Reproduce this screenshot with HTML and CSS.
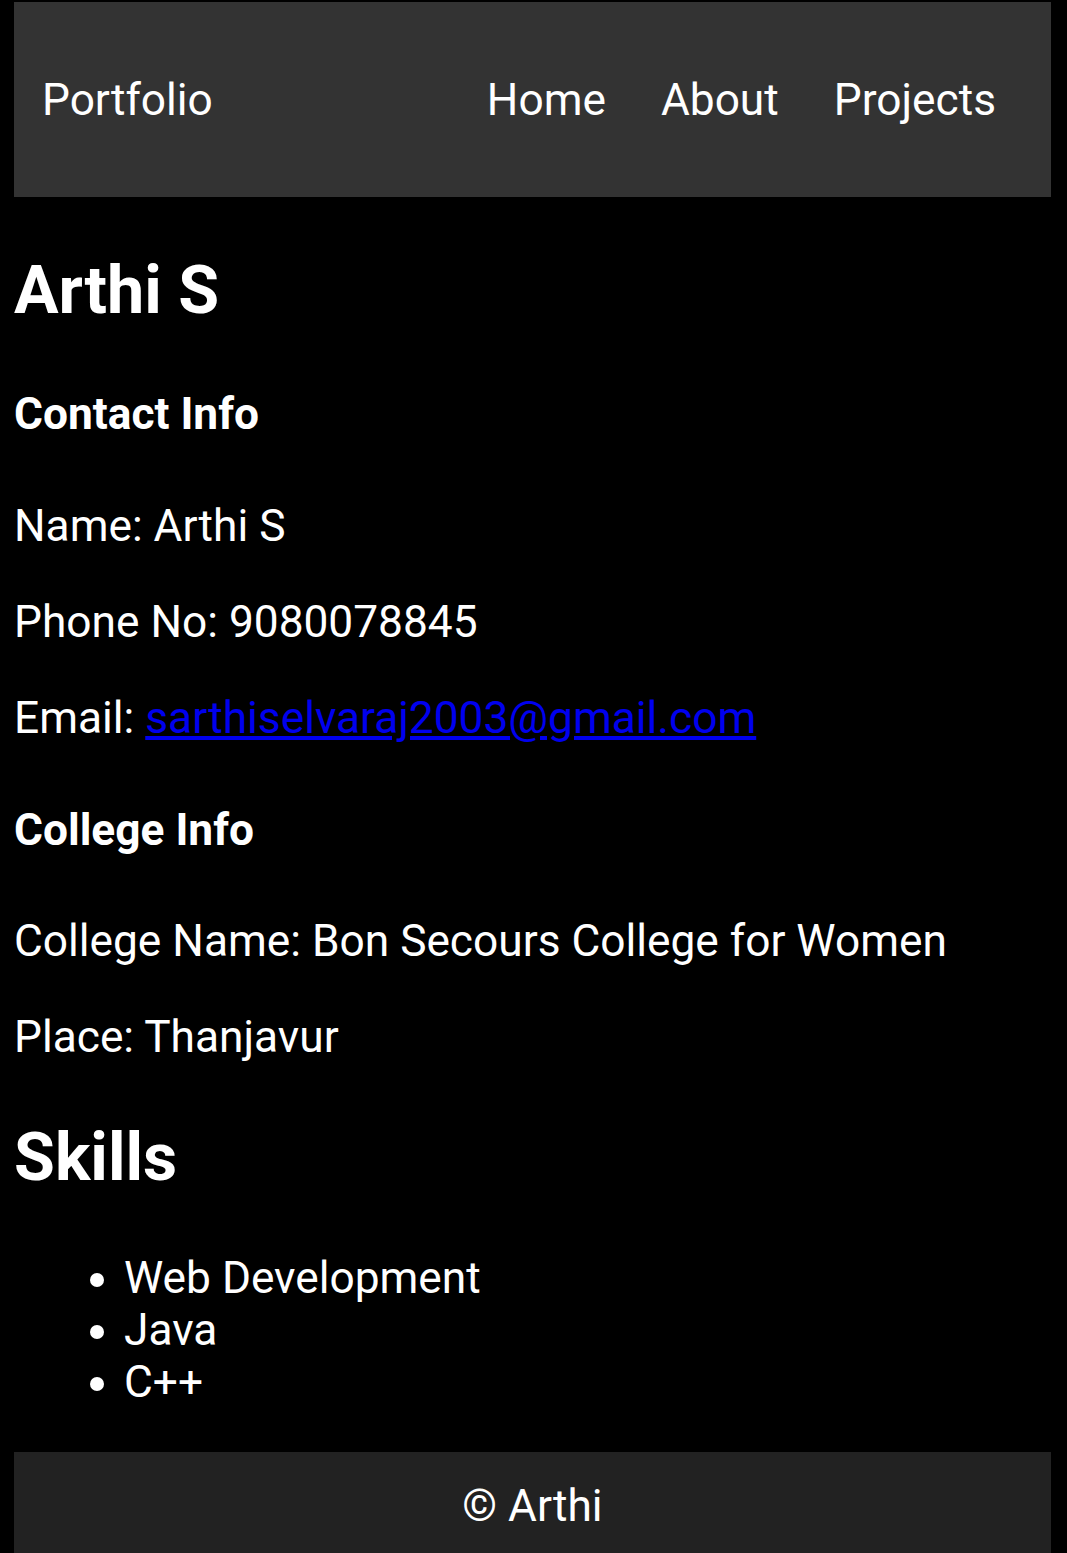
FILE: index.html
```html
<!DOCTYPE html>
<html lang="en">
<head>
<meta charset="utf-8">
<title>Portfolio</title>
<link rel="stylesheet" href="styles.css">
</head>
<body>
<header class="site-header">
  <div class="brand">Portfolio</div>
  <nav class="nav">
    <a href="#home">Home</a>
    <a href="#about">About</a>
    <a href="#projects">Projects</a>
  </nav>
</header>
<main class="content">
  <h1 class="title">Arthi S</h1>
  <h3 class="section section-first">Contact Info</h3>
  <p class="line">Name: Arthi S</p>
  <p class="line">Phone No: 9080078845</p>
  <p class="line">Email: <a class="mail" href="mailto:sarthiselvaraj2003@gmail.com">sarthiselvaraj2003@gmail.com</a></p>
  <h3 class="section section-second">College Info</h3>
  <p class="line">College Name: Bon Secours College for Women</p>
  <p class="line">Place: Thanjavur</p>
  <h2 class="skills-title">Skills</h2>
  <ul class="skills">
    <li>Web Development</li>
    <li>Java</li>
    <li>C++</li>
  </ul>
</main>
<footer class="site-footer">© Arthi</footer>
</body>
</html>
```
FILE: styles.css
```css
html, body {
  background: #000;
}
body {
  margin: 2px 16px 0 14px;
  color: #fff;
  font-family: Roboto, "Liberation Sans", Arial, sans-serif;
}
.site-header {
  background: #333;
  height: 195px;
  box-sizing: border-box;
  padding: 0 55px 0 28px;
  display: flex;
  align-items: center;
  justify-content: space-between;
  font-size: 44.25px;
}
.brand {
  color: #fff;
}
.nav {
  display: flex;
  gap: 55px;
}
.nav a {
  color: #fff;
  text-decoration: none;
}
.content {
  display: flow-root;
}
.title {
  font-size: 66.4px;
  font-weight: bold;
  margin: 54px 0 0;
}
.section {
  font-size: 44.25px;
  font-weight: bold;
}
.section-first {
  margin: 59px 0 60px;
}
.section-second {
  margin: 60px 0 59px;
}
.line {
  font-size: 44.25px;
  margin: 44px 0;
}
.mail {
  color: #0000ee;
}
.skills-title {
  font-size: 66.4px;
  font-weight: bold;
  margin: 55px 0 56px;
}
.skills {
  font-size: 44.25px;
  margin: 0 0 44px;
  padding-left: 110px;
}
.site-footer {
  background: #222;
  text-align: center;
  font-size: 44.25px;
  padding: 28px;
}
```
